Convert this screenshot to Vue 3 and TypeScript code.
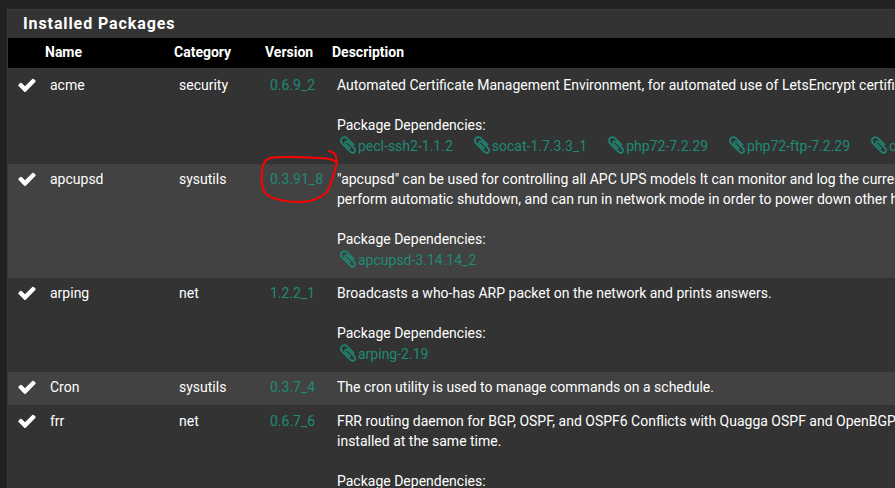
<script setup lang="ts">
interface Pkg {
  name: string
  category: string
  version: string
  lines: string[]
  deps: string[]
}

const checkPath =
  'M1671 566q0 40-28 68l-724 724-136 136q-28 28-68 28t-68-28l-136-136-362-362q-28-28-28-68t28-68l136-136q28-28 68-28t68 28l294 295 656-657q28-28 68-28t68 28l136 136q28 28 28 68z'
const clipPath =
  'M1596 1385q0 117-79 196t-196 79q-135 0-235-100l-777-776q-113-115-113-271 0-159 110-270t269-111q158 0 273 113l605 606q10 10 10 22 0 16-30.5 46.5t-46.5 30.5q-13 0-23-10l-606-607q-79-77-181-77-106 0-179 75t-73 181q0 105 76 181l776 777q63 63 145 63 64 0 106-42t42-106q0-82-63-145l-581-581q-26-24-60-24-29 0-48 19t-19 48q0 32 25 59l410 410q10 10 10 22 0 16-31 47t-47 31q-12 0-22-10l-410-410q-63-61-63-149 0-82 57-139t139-57q88 0 149 63l581 581q100 98 100 235z'

const packages: Pkg[] = [
  {
    name: 'acme',
    category: 'security',
    version: '0.6.9_2',
    lines: ['Automated Certificate Management Environment, for automated use of LetsEncrypt certificates.'],
    deps: ['pecl-ssh2-1.1.2', 'socat-1.7.3.3_1', 'php72-7.2.29', 'php72-ftp-7.2.29', 'curl-7.69.1'],
  },
  {
    name: 'apcupsd',
    category: 'sysutils',
    version: '0.3.91_8',
    lines: [
      '"apcupsd" can be used for controlling all APC UPS models It can monitor and log the current power and input line',
      'perform automatic shutdown, and can run in network mode in order to power down other hosts',
    ],
    deps: ['apcupsd-3.14.14_2'],
  },
  {
    name: 'arping',
    category: 'net',
    version: '1.2.2_1',
    lines: ['Broadcasts a who-has ARP packet on the network and prints answers.'],
    deps: ['arping-2.19'],
  },
  {
    name: 'Cron',
    category: 'sysutils',
    version: '0.3.7_4',
    lines: ['The cron utility is used to manage commands on a schedule.'],
    deps: [],
  },
  {
    name: 'frr',
    category: 'net',
    version: '0.6.7_6',
    lines: [
      'FRR routing daemon for BGP, OSPF, and OSPF6 Conflicts with Quagga OSPF and OpenBGPD',
      'installed at the same time.',
    ],
    deps: ['frr7-7.3.1'],
  },
]
</script>

<template>
  <div class="page">
    <section class="panel">
      <h2 class="heading">Installed Packages</h2>
      <div class="head-row">
        <span class="cell-icon"></span>
        <span class="th name">Name</span>
        <span class="th cat">Category</span>
        <span class="th ver">Version</span>
        <span class="th desc">Description</span>
      </div>
      <div v-for="p in packages" :key="p.name" class="row">
        <span class="cell-icon">
          <svg class="check" viewBox="0 0 1792 1792"><path :d="checkPath" /></svg>
        </span>
        <span class="td name">{{ p.name }}</span>
        <span class="td cat">{{ p.category }}</span>
        <span class="td ver version">{{ p.version }}</span>
        <div class="td desc">
          <div v-for="l in p.lines" :key="l" class="line">{{ l }}</div>
          <template v-if="p.deps.length">
            <div class="line"></div>
            <div class="line">Package Dependencies:</div>
            <div class="deps">
              <span v-for="d in p.deps" :key="d" class="dep">
                <svg class="clip" viewBox="0 0 1792 1792"><path :d="clipPath" /></svg>{{ d }}
              </span>
            </div>
          </template>
        </div>
      </div>
    </section>
    <svg class="scribble" viewBox="0 0 895 488" aria-hidden="true">
      <path
        d="M329 151 C333 152 336 154 336 157 L337 164 M337 163 C334 159 325 158 317 158 C300 157 283 156 270 158 C264 160 262 165 262 172 C261 180 262 190 267 195 C275 200 288 202 300 202 C310 202 320 198 326 193 C331 187 333 176 335 170 L337 162"
      />
    </svg>
  </div>
</template>

<style>
html,
body {
  margin: 0;
  background: #222;
  overflow: hidden;
}
</style>

<style scoped>
.page {
  position: relative;
  width: 895px;
  height: 488px;
  overflow: hidden;
  background: #222;
  padding: 9px 0 0 7px;
  box-sizing: border-box;
  font-family: Roboto, "Liberation Sans", sans-serif;
  font-size: 14px;
  color: #fff;
}
.panel {
  width: 960px;
  border: 1px solid #3a3a3a;
  border-right: 0;
  border-bottom: 0;
  background: #333;
}
.heading {
  margin: 0;
  height: 28px;
  padding-left: 15px;
  font-size: 16px;
  line-height: 28px;
  font-weight: 700;
  letter-spacing: 0.9px;
  background: #333;
  box-sizing: border-box;
}
.head-row {
  display: flex;
  height: 30px;
  padding-bottom: 2px;
  box-sizing: border-box;
  align-items: center;
  background: #000;
  font-weight: 700;
}
.cell-icon {
  flex: 0 0 29px;
  width: 29px;
}
.th,
.td {
  box-sizing: border-box;
}
.name {
  flex: 0 0 129px;
}
.cat {
  flex: 0 0 91px;
}
.ver {
  flex: 0 0 67px;
}
.desc {
  flex: 1;
  min-width: 0;
}
.th {
  padding-left: 8px;
}
.td {
  padding-left: 13px;
  line-height: 20px;
  white-space: nowrap;
}
.row {
  display: flex;
  align-items: flex-start;
  padding: 5px 0 8px;
  background: #333;
}
.row:nth-child(even) {
  background: #424242;
}
.head-row + .row {
  padding-top: 7px;
}
.row:last-child {
  padding-top: 6px;
}
.version {
  color: #1e8a76;
}
.line {
  height: 20px;
}
.deps {
  display: flex;
  gap: 18px;
  height: 21px;
  line-height: 21px;
  margin: 1px 0 -1px;
  color: #1e8a76;
}
.dep {
  display: inline-flex;
  align-items: center;
  flex: none;
}
.clip {
  width: 20px;
  height: 20px;
  margin: -3px 0 0 1px;
  fill: #1e8a76;
  stroke: #1e8a76;
  stroke-width: 30;
}
.check {
  display: block;
  width: 20px;
  height: 20px;
  margin: 0 0 0 9px;
  fill: #fff;
}
.scribble {
  position: absolute;
  inset: 0;
  width: 895px;
  height: 488px;
  pointer-events: none;
  fill: none;
  stroke: #f00;
  stroke-width: 2;
  stroke-linecap: round;
  stroke-linejoin: round;
}
</style>
